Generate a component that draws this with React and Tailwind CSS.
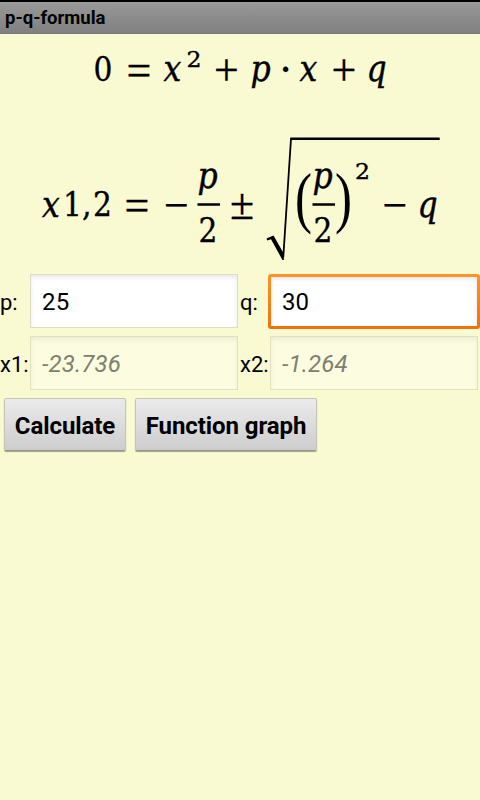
import React, { useState } from 'react';

// Glyphs of the formula: [text, x, baseline]
const VARIABLES = [
  ['x', 163.5, 80.5],
  ['p', 250.5, 80.5],
  ['x', 299.5, 80.5],
  ['q', 366.5, 80.5],
  ['x', 42, 216.5],
  ['p', 197.5, 187.5],
  ['p', 312.5, 187.5],
  ['q', 417.5, 216.5],
];

const DIGITS = [
  ['0', 93.5, 80.5],
  ['1', 63, 216],
  [',', 82, 216],
  ['2', 93, 216],
  ['2', 198.5, 241.5],
  ['2', 313.5, 241.5],
];

const OPERATORS = [
  ['=', 139, 84.5],
  ['+', 226.5, 85],
  ['+', 344, 85],
  ['=', 137, 220],
  ['−', 176.5, 220],
  ['±', 242, 218.5],
  ['−', 395, 220],
];

function Formula() {
  return (
    <svg className="block h-[236px] w-full" viewBox="0 34 480 236" fill="#000">
      <g className="font-['DejaVu_Serif_Condensed','DejaVu_Serif',serif] text-[35px] italic" stroke="#000" strokeWidth="0.4">
        {VARIABLES.map(([t, x, y], i) => (
          <text key={i} x={x} y={y}>{t}</text>
        ))}
      </g>
      <g className="font-['DejaVu_Serif_Condensed','DejaVu_Serif',serif] text-[33px]" stroke="#000" strokeWidth="0.3">
        {DIGITS.map(([t, x, y], i) => (
          <text key={i} x={x} y={y}>{t}</text>
        ))}
      </g>
      <g className="font-['Liberation_Serif',serif] text-[44px]" textAnchor="middle" stroke="#000" strokeWidth="0.3">
        {OPERATORS.map(([t, x, y], i) => (
          <text key={i} x={x} y={y}>{t}</text>
        ))}
        <text x="285.5" y="84">·</text>
      </g>
      <g className="font-['DejaVu_Serif_Condensed','DejaVu_Serif',serif] text-[23px]" stroke="#000" strokeWidth="0.4">
        <text x="186.5" y="66.5" textLength="15" lengthAdjust="spacingAndGlyphs">2</text>
        <text x="355" y="178.5" textLength="15" lengthAdjust="spacingAndGlyphs">2</text>
      </g>
      <g className="font-['Liberation_Serif',serif] text-[68px]">
        <text transform="translate(295 220) scale(.75 1)">(</text>
        <text transform="translate(335 220) scale(.75 1)">)</text>
      </g>

      {/* fraction bars and root */}
      <path d="M197.5 204.5H220M312.5 204.5H335" stroke="#000" strokeWidth="2.4" />
      <path d="M283.3 257L291 138.8H439.5" fill="none" stroke="#000" strokeWidth="1.8" />
      <path d="M290.5 138.7H439.5" stroke="#000" strokeWidth="2.4" />
      <path d="M266.5 238.5L273.5 235.5L284 254L283.8 260H282.5L271 239.3L267.2 240.5Z" />
    </svg>
  );
}

function Field({ label, value, onChange, focused, readOnly }) {
  let box = 'border border-[#dcdcc0] bg-white text-black shadow-[inset_0_3px_4px_rgba(0,0,0,0.08)]';
  if (readOnly) {
    box = 'border border-[#e2e2c2] bg-[#fcfce1] italic text-[#80806f] shadow-[inset_0_3px_5px_rgba(0,0,0,0.06)]';
  }

  return (
    <label className="flex h-[62px] w-[240px] items-center">
      <span className="w-[30px] shrink-0 pt-[3px] text-[22px] text-black">{label}</span>
      {focused ? (
        <span className="-ml-0.5 h-[55px] w-[212px] shrink-0 rounded-[3px] bg-linear-to-b from-[#fb9526] to-[#ee7208] p-[3px]">
          <input
            className="block size-full bg-white pt-[2px] pl-[11px] text-[24px] text-black shadow-[inset_0_2px_4px_rgba(0,0,0,0.1)] outline-none"
            value={value}
            onChange={e => onChange(e.target.value)}
          />
        </span>
      ) : (
        <input
          className={`h-[54px] w-[208px] shrink-0 pt-[2px] pl-[11px] text-[24px] tracking-[0.15px] outline-none ${box}`}
          value={value}
          readOnly={readOnly}
          onChange={e => onChange && onChange(e.target.value)}
        />
      )}
    </label>
  );
}

function Button({ children, className, onClick }) {
  return (
    <button
      onClick={onClick}
      className={`h-[53px] rounded-[2px] border border-[#c4c4b8] border-b-[#96968c] bg-linear-to-b from-[#ebebeb] to-[#cdcdcd] pt-[2px] text-[24px] font-bold tracking-[-0.08px] whitespace-nowrap text-black shadow-[0_1px_1px_rgba(0,0,0,0.35)] ${className}`}
    >
      {children}
    </button>
  );
}

export default function App() {
  const [p, setP] = useState('25');
  const [q, setQ] = useState('30');
  const [result, setResult] = useState(['-23.736', '-1.264']);

  const calculate = () => {
    const root = Math.sqrt((p / 2) ** 2 - q);
    if (Number.isNaN(root)) {
      setResult(['', '']);
      return;
    }
    setResult([(-p / 2 - root).toFixed(3), (-p / 2 + root).toFixed(3)]);
  };

  return (
    <div className="h-screen w-full overflow-hidden bg-[#f9f9d2] font-[Roboto,sans-serif]">
      <header className="flex h-[34px] items-center border-t-2 border-b border-t-black border-b-[#777] bg-linear-to-b from-[#999] to-[#808080] pt-[2px] pl-[5px] text-[18.5px] font-bold text-black">
        p-q-formula
      </header>
      <Formula />
      <div className="grid grid-cols-[240px_240px]">
        <Field label="p:" value={p} onChange={setP} />
        <Field label="q:" value={q} onChange={setQ} focused />
        <Field label="x1:" value={result[0]} readOnly />
        <Field label="x2:" value={result[1]} readOnly />
      </div>
      <div className="flex gap-[9px] pt-[4px] pl-[4px]">
        <Button className="w-[122px]" onClick={calculate}>Calculate</Button>
        <Button className="w-[182px]">Function graph</Button>
      </div>
    </div>
  );
}
